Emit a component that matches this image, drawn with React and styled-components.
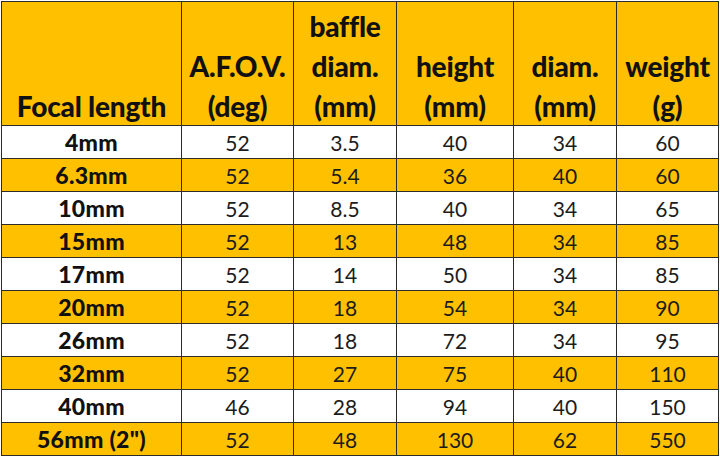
import React from 'react';
import styled, { createGlobalStyle } from 'styled-components';

const Global = createGlobalStyle`
  body {
    margin: 0;
    background: #fff;
    font-family: Lato, "Open Sans", sans-serif;
  }
`

const Table = styled.table`
  border-collapse: collapse;
  table-layout: fixed;
  width: 718px;
  margin: 1px 0 0 1px;
  color: #161616;
`

const Col = styled.col`
  width: ${p => p.w}px;
`

const HeadCell = styled.th`
  height: 123px;
  background: #ffc000;
  border: 1px solid #2b2b2b;
  vertical-align: bottom;
  text-align: center;
  font-size: 28px;
  font-weight: 900;
  line-height: 40px;
  letter-spacing: -0.2px;
  color: #111;
  padding: 0;
`

const HeadLine = styled.div`
  position: relative;
  top: 1px;
`

const Row = styled.tr`
  height: 33px;
  background: ${p => (p.gold ? '#ffc000' : '#ffffff')};
`

const Cell = styled.td`
  border: 1px solid #2b2b2b;
  text-align: center;
  vertical-align: middle;
  font-size: ${p => (p.bold ? 23 : 21)}px;
  font-weight: ${p => (p.bold ? 900 : 400)};
  letter-spacing: ${p => (p.bold ? 0.3 : 0)}px;
  color: ${p => (p.bold ? '#111' : '#1c1c1c')};
  padding: 0;
  line-height: 31px;
`

const columns = [
  { w: 180, label: ['Focal length'] },
  { w: 112, label: ['A.F.O.V.', '(deg)'] },
  { w: 103, label: ['baffle', 'diam.', '(mm)'] },
  { w: 117, label: ['height', '(mm)'] },
  { w: 103, label: ['diam.', '(mm)'] },
  { w: 102, label: ['weight', '(g)'] },
]

const rows = [
  ['4mm', '52', '3.5', '40', '34', '60'],
  ['6.3mm', '52', '5.4', '36', '40', '60'],
  ['10mm', '52', '8.5', '40', '34', '65'],
  ['15mm', '52', '13', '48', '34', '85'],
  ['17mm', '52', '14', '50', '34', '85'],
  ['20mm', '52', '18', '54', '34', '90'],
  ['26mm', '52', '18', '72', '34', '95'],
  ['32mm', '52', '27', '75', '40', '110'],
  ['40mm', '46', '28', '94', '40', '150'],
  ['56mm (2")', '52', '48', '130', '62', '550'],
]

const App = () => {
  return (
    <>
      <Global />
      <Table>
        <colgroup>
          {columns.map((c, i) => (
            <Col key={i} w={c.w} />
          ))}
        </colgroup>
        <thead>
          <tr>
            {columns.map((c, i) => (
              <HeadCell key={i}>
                {c.label.map((l, j) => (
                  <HeadLine key={j}>{l}</HeadLine>
                ))}
              </HeadCell>
            ))}
          </tr>
        </thead>
        <tbody>
          {rows.map((r, i) => (
            <Row key={i} gold={i % 2 === 1}>
              {r.map((v, j) => (
                <Cell key={j} bold={j === 0}>{v}</Cell>
              ))}
            </Row>
          ))}
        </tbody>
      </Table>
    </>
  )
}

export default App
